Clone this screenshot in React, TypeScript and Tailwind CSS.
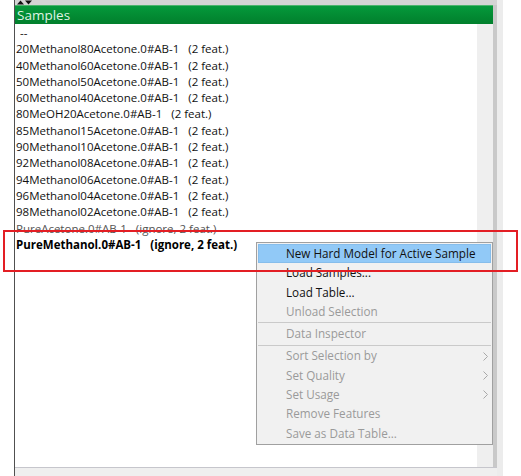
import React from 'react';

interface Sample {
  name: string;
  info: string;
  kind?: 'normal' | 'ignored' | 'active';
}

const samples: Sample[] = [
  { name: '20Methanol80Acetone.0#AB-1', info: '(2 feat.)' },
  { name: '40Methanol60Acetone.0#AB-1', info: '(2 feat.)' },
  { name: '50Methanol50Acetone.0#AB-1', info: '(2 feat.)' },
  { name: '60Methanol40Acetone.0#AB-1', info: '(2 feat.)' },
  { name: '80MeOH20Acetone.0#AB-1', info: '(2 feat.)' },
  { name: '85Methanol15Acetone.0#AB-1', info: '(2 feat.)' },
  { name: '90Methanol10Acetone.0#AB-1', info: '(2 feat.)' },
  { name: '92Methanol08Acetone.0#AB-1', info: '(2 feat.)' },
  { name: '94Methanol06Acetone.0#AB-1', info: '(2 feat.)' },
  { name: '96Methanol04Acetone.0#AB-1', info: '(2 feat.)' },
  { name: '98Methanol02Acetone.0#AB-1', info: '(2 feat.)' },
  { name: 'PureAcetone.0#AB-1', info: '(ignore, 2 feat.)', kind: 'ignored' },
  { name: 'PureMethanol.0#AB-1', info: '(ignore, 2 feat.)', kind: 'active' },
];

interface MenuItem {
  label: string;
  enabled?: boolean;
  highlighted?: boolean;
  submenu?: boolean;
  separatorAfter?: boolean;
}

const menuItems: MenuItem[] = [
  { label: 'New Hard Model for Active Sample', enabled: true, highlighted: true },
  { label: 'Load Samples...', enabled: true },
  { label: 'Load Table...', enabled: true },
  { label: 'Unload Selection', separatorAfter: true },
  { label: 'Data Inspector', separatorAfter: true },
  { label: 'Sort Selection by', submenu: true },
  { label: 'Set Quality', submenu: true },
  { label: 'Set Usage', submenu: true },
  { label: 'Remove Features' },
  { label: 'Save as Data Table...' },
];

function SortArrows() {
  return (
    <svg width="15" height="5" viewBox="0 0 15 5" className="ml-[2px]">
      <polygon points="0,4.5 3.5,0.5 7,4.5" fill="#111" />
      <polygon points="8,0.5 15,0.5 11.5,4.5" fill="#111" />
    </svg>
  );
}

function ContextMenu() {
  return (
    <div className="absolute left-[256px] top-[242px] w-[237px] h-[203px] bg-[#f1f1f1] border border-[#a0a0a0] p-[1px] flex flex-col text-[11.7px]">
      {menuItems.map((item) => (
        <React.Fragment key={item.label}>
          <div
            className={
              item.highlighted
                ? 'h-[19.4px] flex items-center pl-[27px] pr-[2px] bg-[#91c9f7] border border-[#86bdeb] text-[#111]'
                : 'h-[19.4px] flex items-center pl-[28px] pr-[3px] ' +
                  (item.enabled ? 'text-[#111]' : 'text-[#9a9a9a]')
            }
          >
            <span className="flex-1">{item.label}</span>
            {item.submenu && (
              <svg width="5" height="9" viewBox="0 0 5 9">
                <polyline points="0.5,0.5 4.5,4.5 0.5,8.5" fill="none" stroke="#a8a8a8" strokeWidth="1" />
              </svg>
            )}
          </div>
          {item.separatorAfter && <div className="h-[1px] bg-[#cacaca] my-[1px]" />}
        </React.Fragment>
      ))}
    </div>
  );
}

export default function App() {
  return (
    <div
      className="relative w-[521px] h-[476px] bg-white flex text-[11.5px] overflow-hidden"
      style={{ fontFamily: '"Segoe UI", "Open Sans", "Noto Sans", sans-serif' }}
    >
      <div className="w-[14px]" />

      {/* panel */}
      <div className="w-[489px] flex">
        <div className="flex-1 flex flex-col border-l-[1.5px] border-[#505050]">
          {/* sort strip */}
          <div className="h-[5px] bg-[#d4d4d4] flex items-start">
            <SortArrows />
          </div>

          <div className="flex-1 flex min-h-0">
            <div className="flex-1 flex flex-col">
              {/* header */}
              <div className="h-[19px] bg-gradient-to-b from-[#05993b] to-[#017f2c] border-t border-[#4cb36c] flex items-center pl-[2px] text-[#dff3e3] text-[13.5px]">
                Samples
              </div>
              <div className="flex-1 flex">
                <div className="flex-1 bg-white pl-[1px] pt-[1px] leading-[16.3px] text-[#111]">
                  <div className="pl-[4px]">--</div>
                  {samples.map((s) => (
                    <div
                      key={s.name}
                      className={
                        'whitespace-pre ' +
                        (s.kind === 'ignored'
                          ? 'text-[#555]'
                          : s.kind === 'active'
                          ? 'font-bold text-black'
                          : '')
                      }
                    >
                      {s.name + '   ' + s.info}
                    </div>
                  ))}
                </div>
                <div className="w-[16px] bg-[#efefef]" />
              </div>
            </div>
            <div className="w-[4px] bg-[#c9c9c9]" />
          </div>

          {/* bottom edge */}
          <div className="h-[9px] border-t-[1.5px] border-[#c6c6cc] bg-[#efefef]" />
        </div>
        <div className="w-[6px] bg-[#ececec]" />
      </div>

      <div className="flex-1" />

      <ContextMenu />

      {/* annotation frame */}
      <div className="absolute left-[3px] top-[230px] w-[515px] h-[42px] border-2 border-[#e31e24]" />
    </div>
  );
}
